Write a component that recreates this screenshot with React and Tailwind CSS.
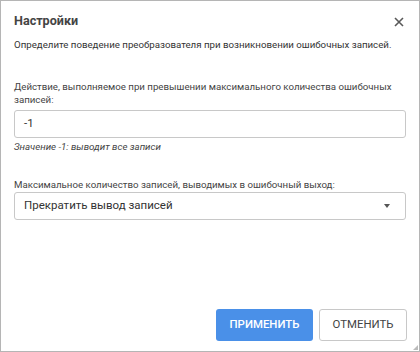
export default function App() {
  return (
    <div className="w-[420px] h-[352px] bg-white border border-[#b5b5b5] relative flex flex-col text-[#333] font-['Roboto',sans-serif]">
      <header className="flex items-center justify-between pl-[13px] pr-[15px] pt-[10px] h-[31px]">
        <h1 className="text-[12.6px] font-bold text-[#444]">Настройки</h1>
        <svg className="w-[10px] h-[10px]" viewBox="0 0 10 10" stroke="#595959" strokeWidth="1.6">
          <path d="M1 1l8 8M9 1l-8 8" />
        </svg>
      </header>

      <main className="px-[13px] flex-1">
        <p className="text-[9.7px] mt-[6px] leading-[14px]">Определите поведение преобразователя при возникновении ошибочных записей.</p>

        <label className="block text-[9.7px] leading-[13px] mt-[28px] text-[#444]">
          Действие, выполняемое при превышении максимального количества ошибочных записей:
        </label>
        <div className="mt-[4px] h-[28px] border border-[#c8c8c8] rounded-[3px] flex items-center px-[9px] text-[11.5px] text-[#333]">-1</div>
        <p className="text-[9.7px] italic leading-[12px] mt-[3px] text-[#444]">Значение -1: выводит все записи</p>

        <label className="block text-[9.7px] leading-[13px] mt-[25px] text-[#444]">
          Максимальное количество записей, выводимых в ошибочный выход:
        </label>
        <div className="mt-[1px] h-[28px] border border-[#c8c8c8] rounded-[3px] flex items-center justify-between pl-[9px] pr-[15px] text-[11.5px] text-[#333]">
          <span>Прекратить вывод записей</span>
          <svg className="w-[6px] h-[4px]" viewBox="0 0 6 4" fill="#555">
            <path d="M0 0h6L3 4z" />
          </svg>
        </div>
      </main>

      <footer className="flex justify-end gap-[6px] px-[12px] pb-[10px]">
        <button className="w-[97px] h-[32px] bg-[#4a90e8] text-white text-[11.4px] rounded-[3px] font-medium">ПРИМЕНИТЬ</button>
        <button className="w-[88px] h-[32px] bg-white border border-[#c8c8c8] text-[#444] text-[11.4px] rounded-[3px]">ОТМЕНИТЬ</button>
      </footer>

      <svg className="absolute right-[1px] bottom-[1px] w-[5px] h-[5px]" viewBox="0 0 5 5" fill="#bbb">
        <path d="M5 0v5H0z" />
      </svg>
    </div>
  );
}
